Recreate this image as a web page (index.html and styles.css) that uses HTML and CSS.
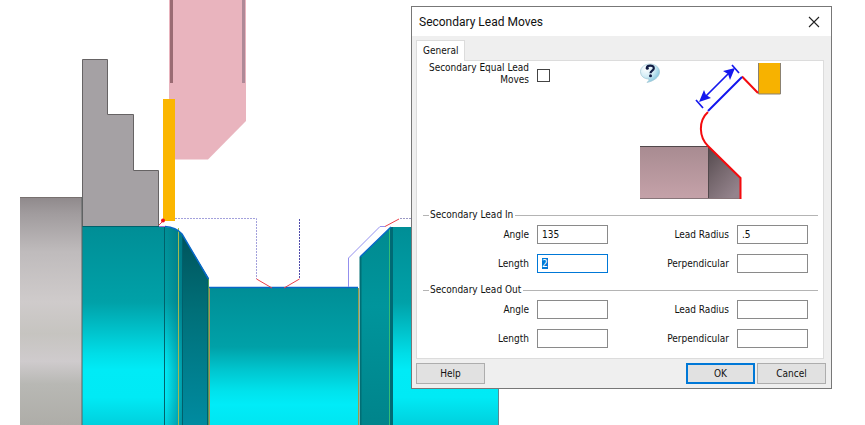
FILE: index.html
```html
<!DOCTYPE html>
<html lang="en">
<head>
<meta charset="utf-8">
<title>Secondary Lead Moves</title>
<link rel="stylesheet" href="styles.css">
</head>
<body>
<main class="workspace">
  <svg class="viewport" viewBox="0 0 865 425" preserveAspectRatio="xMinYMin slice" role="img" aria-label="Turning toolpath">
    <defs>
      <linearGradient id="stock" x2="0" y2="1">
        <stop offset="0" stop-color="#8f898b"/><stop offset=".07" stop-color="#a09b9d"/><stop offset=".24" stop-color="#bfbbbc"/><stop offset=".46" stop-color="#cfcbcb"/><stop offset=".6" stop-color="#c6c4c0"/><stop offset=".72" stop-color="#cfcbcd"/><stop offset=".82" stop-color="#b8b8b4"/><stop offset="1" stop-color="#aeada8"/>
      </linearGradient>
      <linearGradient id="large" gradientUnits="userSpaceOnUse" x1="0" y1="227" x2="0" y2="425">
        <stop offset="0" stop-color="#008e96"/><stop offset=".38" stop-color="#00a1a8"/><stop offset=".5" stop-color="#00bcc5"/><stop offset=".64" stop-color="#00dde7"/><stop offset=".72" stop-color="#00ebf6"/><stop offset=".86" stop-color="#00eaf5"/><stop offset="1" stop-color="#00d0dd"/>
      </linearGradient>
      <linearGradient id="small" gradientUnits="userSpaceOnUse" x1="0" y1="288" x2="0" y2="425">
        <stop offset="0" stop-color="#008e96"/><stop offset=".43" stop-color="#00a1a8"/><stop offset=".6" stop-color="#00c6cf"/><stop offset=".75" stop-color="#00e2ec"/><stop offset=".85" stop-color="#00ecf8"/><stop offset="1" stop-color="#00e6f1"/>
      </linearGradient>
      <linearGradient id="round" x2="1" y2="0">
        <stop offset="0" stop-color="#006a78" stop-opacity="0"/><stop offset="1" stop-color="#006a78" stop-opacity=".6"/>
      </linearGradient>
      <linearGradient id="taper" x2="0" y2="1">
        <stop offset="0" stop-color="#00545c"/><stop offset=".4" stop-color="#006f78"/><stop offset=".75" stop-color="#008090"/><stop offset="1" stop-color="#008ba0"/>
      </linearGradient>
      <linearGradient id="chamfer" x2="0" y2="1">
        <stop offset="0" stop-color="#008a90"/><stop offset=".4" stop-color="#00959c"/><stop offset="1" stop-color="#00848b"/>
      </linearGradient>
    </defs>
    <rect x="20" y="197" width="62" height="228" fill="url(#stock)"/>
    <path d="M20 197.500H82" stroke="#77706f"/>
    <path d="M82.500 227V59.500H107.500V114.500H133.500V170.500H158.500V227Z" fill="#a5a1a4" stroke="#666364"/>
    <path d="M169 0H246V121L208 159.500H169Z" fill="#e9b4be"/>
    <path d="M171.500 0V83" stroke="#9a6b73" stroke-width="3"/>
    <path d="M243.500 0V83" stroke="#ae8997" stroke-width="3"/>
    <rect x="163" y="99" width="12" height="122" fill="#fbb600"/>

    <path d="M82 227H165Q176 227 182 234L209 279V425H82Z" fill="url(#large)"/>
    <path d="M165 227Q176 227 182 234V425H165Z" fill="url(#round)"/>
    <path d="M182 234L209 279V425H182Z" fill="url(#taper)"/>
    <path d="M82 226.500H159M164.500 227V425" stroke="#00616b" fill="none"/>
    <path d="M182.500 236V425M207.500 279V425" stroke="#005f6b"/>
    <path d="M178.500 228V425" stroke="#a0ba4e"/>
    <path d="M208.500 279V425" stroke="#4d9c57"/>
    <path d="M209.500 288V425" stroke="#ac8e5b"/>
    <path d="M82 197V425" stroke="#5b6262"/>
    <rect x="210" y="288" width="148" height="137" fill="url(#small)"/>
    <path d="M358.500 288V425" stroke="#9b9b48"/>
    <path d="M360 257L391 227V425H360Z" fill="url(#chamfer)"/>
    <path d="M360.500 257V425" stroke="#006e75" stroke-width="2"/>
    <rect x="391" y="227" width="107" height="198" fill="url(#large)"/>
    <path d="M389.500 228V425" stroke="#34bd75"/>
    <path d="M391.500 227V425" stroke="#006a74" stroke-width="3"/>
    <path d="M498.500 227V425" stroke="#5b8a92"/>

    <path d="M165 226.500Q176 227 182 234L208.500 279M209 287.500H358M360 257L391 227" fill="none" stroke="#0868c7" stroke-width="1.500"/>
    <path d="M348.500 287V258L380 226.500H385" fill="none" stroke="#938fee"/>
    <path d="M175 218.500H256.500V279" fill="none" stroke="#a3a1dc" stroke-dasharray="2 1"/>
    <path d="M299.500 219V279" stroke="#504cab" stroke-dasharray="2 1"/>
    <path d="M400 218.500H411" stroke="#9a98c4" stroke-dasharray="2 1"/>
    <path d="M256.500 279L272 288M284 288L299.500 279M385 226.500L399 219M159 225L163 221" fill="none" stroke="#ec3f48"/>
    <path d="M159 226.500H165" stroke="#b46bd0"/>
    <circle cx="163" cy="220.500" r="2" fill="#f01018"/>
  </svg>

  <form class="dialog" role="dialog" aria-labelledby="dialog-title">
    <header class="titlebar">
      <h1 class="title" id="dialog-title">Secondary Lead Moves</h1>
      <button class="close" type="button" aria-label="Close">
        <svg width="12" height="12" viewBox="0 0 12 12"><path d="M1 1L11 11M11 1L1 11" stroke="#222" stroke-width="1.100"/></svg>
      </button>
    </header>
    <div class="tabs" role="tablist">
      <button class="tab" type="button" role="tab" aria-selected="true">General</button>
    </div>
    <section class="panel">
      <div class="overview">
        <label class="check-label" for="equal">Secondary Equal Lead Moves</label>
        <input class="check" id="equal" type="checkbox">
        <svg class="diagram" width="142" height="137" viewBox="0 0 142 137" role="img" aria-label="Lead length diagram">
          <defs>
            <linearGradient id="bar" x2="0" y2="1"><stop offset="0" stop-color="#a88b91"/><stop offset="1" stop-color="#c5a2a9"/></linearGradient>
            <linearGradient id="bevel" x1="0" y1="0" x2=".7" y2="1"><stop offset="0" stop-color="#51474b"/><stop offset=".5" stop-color="#75676d"/><stop offset="1" stop-color="#94838c"/></linearGradient>
            <radialGradient id="bubble" cx=".3" cy=".25" r=".85"><stop offset="0" stop-color="#fff"/><stop offset=".5" stop-color="#d4edf6"/><stop offset="1" stop-color="#72bed9"/></radialGradient>
          </defs>
          <path d="M10 1C15 1 19.500 4 19.500 9C19.500 14 14 18 7 19.500Q9.500 17.500 9 16C4 16 .5 13 .5 8.500C.5 4 5 1 10 1Z" fill="url(#bubble)" stroke="#a1c5d2" stroke-width=".7"/>
          <path d="M6.800 5C7 1.800 13.800 1.600 13.800 5.200C13.800 7.800 10.500 7.500 10.500 10.300" fill="none" stroke="#111c43" stroke-width="2.200"/>
          <circle cx="7.300" cy="5.300" r="1.500" fill="#111c43"/><circle cx="10.500" cy="12.800" r="1.500" fill="#111c43"/>
          <rect x="0" y="83" width="68" height="53" fill="url(#bar)"/>
          <path d="M68 83L100 115V136H68Z" fill="url(#bevel)"/>
          <path d="M0 83.500H68M68.500 83V136" stroke="#51484b" fill="none"/>
          <path d="M0 135.500H100" stroke="#877579"/>
          <rect x="118.500" y="0" width="22" height="31" fill="#f7b200"/>
          <path d="M118.500 0V31H140.500V0" fill="none" stroke="#8b8170"/>
          <path d="M102 13.500L118 30M68 49C58 58 59 74 68 83L100.500 115V136" fill="none" stroke="#f40b0e" stroke-width="2"/>
          <path d="M102 14L68 48" stroke="#1114ef" stroke-width="2"/>
          <path d="M56 37L63 45M92 2L99 10M63 36L92 7" stroke="#1518ee" stroke-width="1.700"/>
          <path d="M59 39L64 27L66 32L71 35ZM95 5L83 8L88 11L90 17Z" fill="#1518ee"/>
        </svg>
      </div>
      <fieldset class="group">
        <legend>Secondary Lead In</legend>
        <div class="fields">
          <label for="in-angle">Angle</label><input class="value" id="in-angle" type="text" value="135">
          <label for="in-radius">Lead Radius</label><input class="value" id="in-radius" type="text" value=".5">
          <label for="in-length">Length</label><input class="value" id="in-length" type="text" value="2">
          <label for="in-perp">Perpendicular</label><input class="value" id="in-perp" type="text">
        </div>
      </fieldset>
      <fieldset class="group">
        <legend>Secondary Lead Out</legend>
        <div class="fields">
          <label for="out-angle">Angle</label><input class="value" id="out-angle" type="text">
          <label for="out-radius">Lead Radius</label><input class="value" id="out-radius" type="text">
          <label for="out-length">Length</label><input class="value" id="out-length" type="text">
          <label for="out-perp">Perpendicular</label><input class="value" id="out-perp" type="text">
        </div>
      </fieldset>
    </section>
    <footer class="actions">
      <button class="action help" type="button">Help</button>
      <button class="action primary" type="submit">OK</button>
      <button class="action" type="button">Cancel</button>
    </footer>
  </form>
</main>
<script src="dialog.js"></script>
</body>
</html>
```
FILE: styles.css
```css
* { box-sizing: border-box; }

body {
  margin: 0;
  background: #fff;
  color: #111;
  font: 10px/12px "DejaVu Sans Condensed", "DejaVu Sans", sans-serif;
}

button, input { font: inherit; color: inherit; }

.workspace { position: relative; min-height: 100vh; overflow: hidden; }
.viewport { display: block; width: 100%; height: 100vh; }

.dialog {
  position: absolute;
  top: 6px;
  left: 411px;
  width: 421px;
  border: 1px solid #777;
  background: #efefef;
}

.titlebar {
  display: flex;
  align-items: center;
  justify-content: space-between;
  height: 29px;
  padding: 0 10px 0 7px;
  background: #fff;
}
.title { margin: 0; font: 12px/16px Roboto, "Open Sans", sans-serif; }
.close { display: flex; padding: 1px; border: 0; background: none; }

.tabs { display: flex; padding: 4px 4px 0; }
.tab {
  position: relative;
  height: 21px;
  margin-bottom: -1px;
  padding: 0 6px;
  border: 1px solid #dcdcdc;
  border-bottom: 0;
  background: #fff;
}

.panel {
  margin: 0 7px 0 4px;
  padding: 0 5px 0 6px;
  border: 1px solid #dcdcdc;
  background: #fff;
}

.overview { display: flex; gap: 8px; height: 148px; padding-top: 1px; }
.check-label { width: 106px; text-align: right; }
.check {
  appearance: none;
  width: 13px;
  height: 13px;
  margin: 7px 0 0;
  border: 1px solid #444;
  background: #fff;
}
.diagram { margin: 1px 36px 0 auto; }

.group {
  min-width: 0;
  margin: 0;
  padding: 4px 10px 10px 0;
  border: 0;
  border-top: 1px solid #b4b4b4;
}
.group + .group { margin-top: 1px; }
.group legend { margin-left: 6px; padding: 0 2px 0 1px; }

.fields {
  display: grid;
  grid-template-columns: 106px 71px 1fr 71px;
  gap: 10px 8px;
  align-items: center;
  text-align: right;
}
.value {
  width: 100%;
  height: 19px;
  padding: 0 4px;
  border: 1px solid #8a8a8a;
  border-radius: 0;
  background: #fff;
  outline: 0;
}
.value:focus { border-color: #0078d7; }
.value::selection { background: #0078d7; color: #fff; }

.actions { display: flex; gap: 2px; padding: 4px 5px 4px 4px; }
.action {
  width: 69px;
  height: 21px;
  padding: 0;
  border: 1px solid #adadad;
  background: #e1e1e1;
}
.help { margin-right: auto; }
.primary { border: 2px solid #0078d7; }
```
FILE: dialog.js
```js
const lengthInput = document.getElementById("in-length");
lengthInput.focus();
lengthInput.select();
```
